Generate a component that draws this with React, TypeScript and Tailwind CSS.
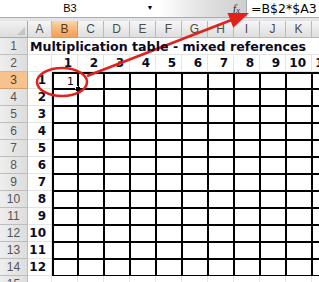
import React from "react";

const COLS = ["A", "B", "C", "D", "E", "F", "G", "H", "I", "J", "K", "L"];
const ROWS = Array.from({ length: 15 }, (_, i) => i + 1);

const bold = "font-['DejaVu_Sans',sans-serif] font-bold text-[12px]";

function Cell({ r, c }: { r: number; c: number }) {
  const inTable = r >= 3 && r <= 14 && c >= 1;
  const active = r === 3 && c === 1;

  if (r === 1) {
    return (
      <div className="relative border-b border-[#e4e4e4]">
        {c === 0 && (
          <span className="absolute left-[2px] top-[1px] z-10 whitespace-nowrap font-['DejaVu_Sans',sans-serif] text-[12.6px] font-bold leading-[15px] text-[#0a0a1e]">
            Multiplication table - mixed references
          </span>
        )}
      </div>
    );
  }

  let content: React.ReactNode = null;
  if (r === 2 && c >= 1) content = <span className={bold}>{c}</span>;
  if (c === 0 && r >= 3 && r <= 14) content = <span className={bold}>{r - 2}</span>;
  if (active)
    content = (
      <span className="font-['DejaVu_Sans',sans-serif] text-[11px]">1</span>
    );

  const border = inTable
    ? `border border-black ${c === 1 ? "border-l-2" : ""} ${r === 3 ? "border-t-2" : ""}`
    : "border-r border-b border-[#e4e4e4]";

  return (
    <div
      className={`relative flex items-center justify-end overflow-visible leading-none text-[#0a0a1e] ${
        active ? "pr-[3px]" : "pr-[5px]"
      } ${border}`}
    >
      {content}
      {active && (
        <>
          <div className="absolute -inset-[2px] border-2 border-black" />
          <div className="absolute -bottom-[4px] -right-[4px] h-[6px] w-[6px] border border-white bg-black" />
        </>
      )}
    </div>
  );
}

export default function App() {
  return (
    <div className="relative h-[282px] w-[319px] overflow-hidden bg-white">
      {/* formula bar */}
      <div className="flex h-[18px] border-b border-[#a7acb3] bg-white font-['Liberation_Sans',sans-serif]">
        <div className="w-[140px] pt-[2px] text-center text-[11px] leading-[13px] text-black">
          B3
        </div>
        <div className="flex w-[20px] items-center justify-center text-[7px] text-black">
          ▼
        </div>
        <div className="flex w-[86px] items-center justify-end bg-gradient-to-r from-white via-[#e2e2e2] to-[#cfcfcf] pr-[6px]">
          <span className="font-['Liberation_Serif',serif] text-[12px] italic leading-none text-[#333]">
            f<span className="text-[9px]">x</span>
          </span>
        </div>
        <div className="flex-1 border-l border-[#a7acb3] pl-[4px] pt-[1px] font-['DejaVu_Sans',sans-serif] text-[12.5px] leading-[15px] text-black">
          =B$2*$A3
        </div>
      </div>
      <div className="h-[3px] bg-[#e3e5e8]" />

      {/* sheet */}
      <div className="grid grid-cols-[28px_24px_repeat(11,26px)] auto-rows-[17px] font-['Liberation_Sans',sans-serif]">
        {/* corner */}
        <div className="relative border-b border-r border-[#a9a9a9] bg-gradient-to-b from-[#f2f2f2] to-[#dcdcdc]">
          <div className="absolute bottom-[2px] right-[2px] h-0 w-0 border-b-[8px] border-l-[8px] border-b-[#c4c4c4] border-l-transparent" />
        </div>
        {COLS.map((col) => (
          <div
            key={col}
            className={`flex items-center justify-center border-b border-r text-[12px] ${
              col === "B"
                ? "border-[#d99a5c] bg-gradient-to-b from-[#fbd7a8] via-[#f8b677] to-[#f59e55] text-[#5a3a1a]"
                : "border-[#b9b9b9] bg-gradient-to-b from-[#f6f6f6] to-[#dedede] text-[#4d4d4d]"
            }`}
          >
            {col}
          </div>
        ))}

        {ROWS.map((r) => (
          <React.Fragment key={r}>
            <div
              className={`flex items-center justify-center border-b border-r text-[12px] ${
                r === 3
                  ? "border-[#d8a16b] bg-[#f7c28e] text-[#5a3a1a]"
                  : "border-[#bdbdbd] bg-gradient-to-r from-[#eeeeee] to-[#dddddd] text-[#555]"
              }`}
            >
              {r}
            </div>
            {COLS.map((_, c) => (
              <Cell key={c} r={r} c={c} />
            ))}
          </React.Fragment>
        ))}
      </div>

      {/* annotation */}
      <svg
        className="pointer-events-none absolute inset-0"
        width={319}
        height={282}
        viewBox="0 0 319 282"
      >
        <ellipse cx={62} cy={82} rx={25} ry={14} fill="none" stroke="#e3201b" strokeWidth={2.5} />
        <line x1={87} y1={76} x2={234} y2={19} stroke="#e3201b" strokeWidth={2.5} />
        <polygon points="249,13 233.3,27.7 227.5,12.9" fill="#e3201b" />
      </svg>
    </div>
  );
}
